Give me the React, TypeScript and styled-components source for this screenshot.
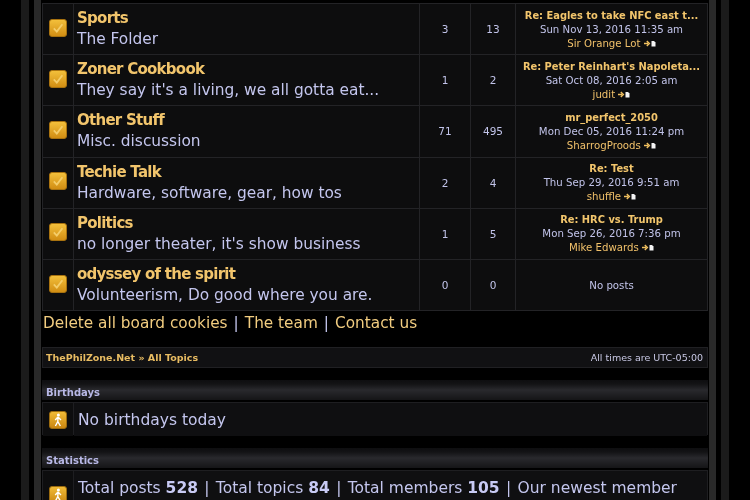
import styled, { createGlobalStyle } from 'styled-components';

const forums = [
  { name: 'Sports', desc: 'The Folder', topics: 3, posts: 13, title: 'Re: Eagles to take NFC east t...', date: 'Sun Nov 13, 2016 11:35 am', author: 'Sir Orange Lot' },
  { name: 'Zoner Cookbook', desc: "They say it's a living, we all gotta eat...", topics: 1, posts: 2, title: "Re: Peter Reinhart's Napoleta...", date: 'Sat Oct 08, 2016 2:05 am', author: 'judit' },
  { name: 'Other Stuff', desc: 'Misc. discussion', topics: 71, posts: 495, title: 'mr_perfect_2050', date: 'Mon Dec 05, 2016 11:24 pm', author: 'SharrogProods' },
  { name: 'Techie Talk', desc: 'Hardware, software, gear, how tos', topics: 2, posts: 4, title: 'Re: Test', date: 'Thu Sep 29, 2016 9:51 am', author: 'shuffle' },
  { name: 'Politics', desc: "no longer theater, it's show business", topics: 1, posts: 5, title: 'Re: HRC vs. Trump', date: 'Mon Sep 26, 2016 7:36 pm', author: 'Mike Edwards' },
  { name: 'odyssey of the spirit', desc: 'Volunteerism, Do good where you are.', topics: 0, posts: 0 },
];

function CheckIcon() {
  return (
    <svg width="18" height="18" viewBox="0 0 18 18">
      <defs>
        <linearGradient id="chk" x1="0" y1="0" x2="0" y2="1">
          <stop offset="0" stopColor="#f4c13c" />
          <stop offset="1" stopColor="#d08c12" />
        </linearGradient>
      </defs>
      <rect x="0.5" y="0.5" width="17" height="17" rx="2.5" fill="url(#chk)" stroke="#a8720f" />
      <path d="M4.8 9.4 L7.8 12.6 L13.4 5.2" fill="none" stroke="#f4cd6a" strokeWidth="1.8" />
    </svg>
  );
}

function WalkerIcon() {
  return (
    <svg width="18" height="18" viewBox="0 0 18 18">
      <defs>
        <linearGradient id="walk" x1="0" y1="0" x2="0" y2="1">
          <stop offset="0" stopColor="#f2bd38" />
          <stop offset="1" stopColor="#c98510" />
        </linearGradient>
      </defs>
      <rect x="0.5" y="0.5" width="17" height="17" rx="2.5" fill="url(#walk)" stroke="#9a6a0e" />
      <circle cx="9.4" cy="3.9" r="1.5" fill="#fff" />
      <path d="M9 6 L6.2 9 M9 6 L12 9 M9 6 L8.8 10.5 L6.4 15 M8.8 10.5 L11.4 15" fill="none" stroke="#fff" strokeWidth="1.4" />
    </svg>
  );
}

function LastPostIcon() {
  return (
    <svg width="12" height="7" viewBox="0 0 12 7">
      <path d="M0 3.5 H4 M2.8 1 L5.4 3.5 L2.8 6" fill="none" stroke="#f0c060" strokeWidth="1.4" />
      <path d="M7.5 1 H10 L11.5 2.5 V6.5 H7.5 Z" fill="#f4f4f4" />
    </svg>
  );
}

export default function App() {
  return (
    <>
      <GlobalStyle />
      <Page>
        <OuterRail />
        <InnerRail />
        <Content>
          <ForumTable>
            {forums.map((forum) => (
              <ForumRow key={forum.name}>
                <IconCell>
                  <CheckIcon />
                </IconCell>
                <TitleCell>
                  <ForumName>{forum.name}</ForumName>
                  <ForumDesc>{forum.desc}</ForumDesc>
                </TitleCell>
                <CountCell>{forum.topics}</CountCell>
                <CountCell>{forum.posts}</CountCell>
                <LastCell>
                  {forum.title ? (
                    <>
                      <LastTitle>{forum.title}</LastTitle>
                      <span>{forum.date}</span>
                      <LastAuthor>
                        {forum.author} <LastPostIcon />
                      </LastAuthor>
                    </>
                  ) : (
                    <span>No posts</span>
                  )}
                </LastCell>
              </ForumRow>
            ))}
          </ForumTable>

          <FooterLinks>
            <a>Delete all board cookies</a> <Pipe>|</Pipe> <a>The team</a> <Pipe>|</Pipe> <a>Contact us</a>
          </FooterLinks>

          <Breadcrumb>
            <b>ThePhilZone.Net » All Topics</b>
            <Times>All times are UTC-05:00</Times>
          </Breadcrumb>

          <Section>
            <SectionHead>Birthdays</SectionHead>
            <InfoRow>
              <InfoIcon>
                <WalkerIcon />
              </InfoIcon>
              <InfoText>No birthdays today</InfoText>
            </InfoRow>
          </Section>

          <Section>
            <SectionHead>Statistics</SectionHead>
            <InfoRow $tall>
              <InfoIcon>
                <WalkerIcon />
              </InfoIcon>
              <InfoText>
                Total posts <b>528</b> <StatPipe>|</StatPipe> Total topics <b>84</b> <StatPipe>|</StatPipe> Total members <b>105</b> <StatPipe>|</StatPipe> Our newest member
              </InfoText>
            </InfoRow>
          </Section>
        </Content>
        <InnerRail />
        <OuterRail />
      </Page>
    </>
  );
}

const GlobalStyle = createGlobalStyle`
  html, body {
    margin: 0;
    height: 100%;
    background: #000;
    overflow: hidden;
  }
  body {
    font-family: "DejaVu Sans", Verdana, sans-serif;
    color: #c2c4ea;
  }
`;

const Page = styled.div`
  height: 500px;
  overflow: hidden;
  display: flex;
  justify-content: center;
  align-items: stretch;
  background: #000;
  filter: blur(0.35px);
`;

const OuterRail = styled.div`
  width: 8px;
  background: #1b1b1b;
  margin: 0 5px;
`;

const InnerRail = styled.div`
  width: 7px;
  background: #2a2a2a;
`;

const Content = styled.div`
  width: 666px;
  margin: 0 1px;
  padding-top: 3px;
  display: flex;
  flex-direction: column;
  & > * {
    flex-shrink: 0;
  }
`;

const ForumTable = styled.div`
  display: flex;
  flex-direction: column;
  gap: 1px;
  padding: 1px;
  background: #232326;
`;

const ForumRow = styled.div`
  display: grid;
  grid-template-columns: 30px 345px 50px 44px 1fr;
  gap: 1px;
  height: 50.2px;
`;

const Cell = styled.div`
  background: #0d0d0e;
  display: flex;
  align-items: center;
  justify-content: center;
`;

const IconCell = styled(Cell)`
  padding-bottom: 3px;
`;

const TitleCell = styled(Cell)`
  flex-direction: column;
  align-items: flex-start;
  padding: 0 0 1px 3px;
  gap: 1px;
`;

const ForumName = styled.div`
  font-size: 15px;
  font-weight: bold;
  letter-spacing: -0.74px;
  color: #f2c56c;
  line-height: 20px;
`;

const ForumDesc = styled.div`
  font-size: 15.4px;
  line-height: 20px;
  color: #c4c6ee;
`;

const CountCell = styled(Cell)`
  font-size: 10.5px;
  color: #c2c4ea;
`;

const LastCell = styled(Cell)`
  flex-direction: column;
  font-size: 10.2px;
  line-height: 14px;
  white-space: nowrap;
  padding-top: 1px;
`;

const LastTitle = styled.div`
  font-size: 9.9px;
  font-weight: bold;
  color: #f2c56c;
`;

const LastAuthor = styled.div`
  color: #f0c06a;
`;

const FooterLinks = styled.div`
  font-size: 15.3px;
  line-height: 22px;
  margin-top: 1px;
  padding-left: 1px;
  color: #f2cd80;
  white-space: nowrap;
`;

const Pipe = styled.span`
  color: #c4c6ee;
  padding: 0 1.2px;
`;

const Breadcrumb = styled.div`
  margin-top: 13px;
  height: 21px;
  padding: 0 5px 0 4px;
  display: flex;
  align-items: center;
  justify-content: space-between;
  background: #111113;
  box-shadow: inset 0 0 0 1px #202023;
  font-size: 9.5px;
  color: #e8bc62;
`;

const Times = styled.span`
  font-size: 9.5px;
  color: #c8c8e4;
`;

const Section = styled.section`
  margin-top: 12px;
  margin-bottom: 1px;
`;

const SectionHead = styled.div`
  height: 20px;
  box-sizing: border-box;
  padding: 4px 0 0 4px;
  display: flex;
  align-items: center;
  font-size: 10px;
  font-weight: bold;
  color: #b8b8e6;
  background: linear-gradient(#0e0e10, #131315 20%, #29292d 50%, #151517);
`;

const InfoRow = styled.div<{ $tall?: boolean }>`
  box-sizing: border-box;
  margin-top: 2px;
  display: grid;
  grid-template-columns: 30px 1fr;
  gap: 1px;
  padding: 1px;
  height: ${(props) => (props.$tall ? '50px' : '33px')};
  background: #1e1e21;
`;

const InfoIcon = styled(Cell)``;

const InfoText = styled.div`
  background: #0f0f11;
  padding: 2px 0 0 4px;
  font-size: 15.5px;
  line-height: 31px;
  color: #c4c6ee;
  white-space: nowrap;
  b {
    color: #c8caf4;
  }
`;

const StatPipe = styled.span`
  padding: 0 1.4px;
`;
